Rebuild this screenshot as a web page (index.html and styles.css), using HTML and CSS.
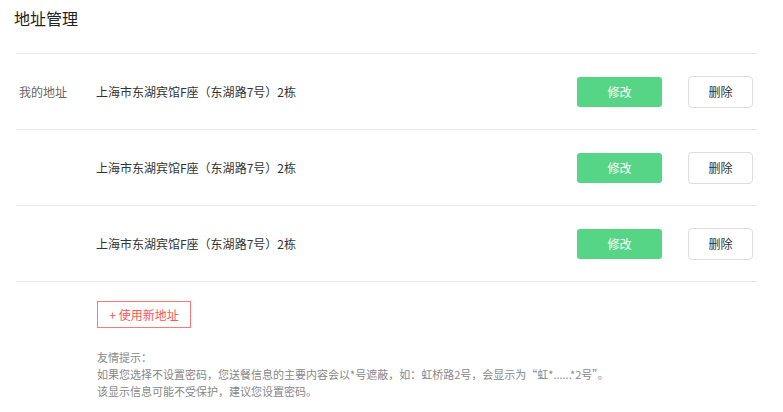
FILE: index.html
```html
<!DOCTYPE html>
<html lang="zh-CN">
<head>
  <meta charset="UTF-8">
  <title>地址管理</title>
  <link rel="stylesheet" href="styles.css">
</head>
<body>
  <div class="page">
    <h2 class="title">地址管理</h2>

    <div class="address-list">
      <div class="row">
        <div class="label">我的地址</div>
        <div class="addr">上海市东湖宾馆F座（东湖路7号）2栋</div>
        <button class="btn-edit">修改</button>
        <button class="btn-del">删除</button>
      </div>
      <div class="row">
        <div class="label"></div>
        <div class="addr">上海市东湖宾馆F座（东湖路7号）2栋</div>
        <button class="btn-edit">修改</button>
        <button class="btn-del">删除</button>
      </div>
      <div class="row">
        <div class="label"></div>
        <div class="addr">上海市东湖宾馆F座（东湖路7号）2栋</div>
        <button class="btn-edit">修改</button>
        <button class="btn-del">删除</button>
      </div>
    </div>

    <div class="extra">
      <button class="btn-new">+ 使用新地址</button>
      <div class="tips">
        友情提示：<br>
        如果您选择不设置密码，您送餐信息的主要内容会以*号遮蔽，如：虹桥路2号，会显示为“虹*......*2号”。<br>
        该显示信息可能不受保护，建议您设置密码。
      </div>
    </div>
  </div>
</body>
</html>
```

FILE: styles.css
```css
body {
  margin: 0;
  background: #fff;
  font-family: "Microsoft YaHei", "Noto Sans CJK SC", "Liberation Sans", sans-serif;
  color: #333;
}

.page {
  padding: 7px 0 0 0;
}

.title {
  margin: 0 0 0 14px;
  font-size: 16px;
  font-weight: normal;
  line-height: 22px;
  color: #222;
  height: 46px;
}

.address-list {
  width: 741px;
  margin-left: 16px;
  border-top: 1px solid #e6e6e6;
}

.row {
  display: flex;
  align-items: center;
  height: 75px;
  border-bottom: 1px solid #e6e6e6;
}

.label {
  box-sizing: border-box;
  width: 80px;
  padding-left: 3px;
  font-size: 12px;
  color: #666;
}

.addr {
  flex: 1;
  font-size: 12px;
  color: #333;
}

.btn-edit {
  width: 85px;
  height: 30px;
  border: none;
  border-radius: 3px;
  background: #55d585;
  color: #fff;
  font-family: inherit;
  font-size: 12px;
  cursor: pointer;
}

.btn-del {
  width: 65px;
  height: 32px;
  margin-left: 26px;
  margin-right: 4px;
  border: 1px solid #dcdcdc;
  border-radius: 4px;
  background: #fff;
  color: #333;
  font-family: inherit;
  font-size: 12px;
  cursor: pointer;
}

.extra {
  padding: 19px 0 0 97px;
}

.btn-new {
  width: 94px;
  height: 27px;
  border: 1px solid #f77;
  border-radius: 0;
  background: #fff;
  color: #f55;
  font-family: inherit;
  font-size: 12px;
  cursor: pointer;
}

.tips {
  margin-top: 21px;
  font-size: 11px;
  line-height: 17px;
  color: #888;
}
```
